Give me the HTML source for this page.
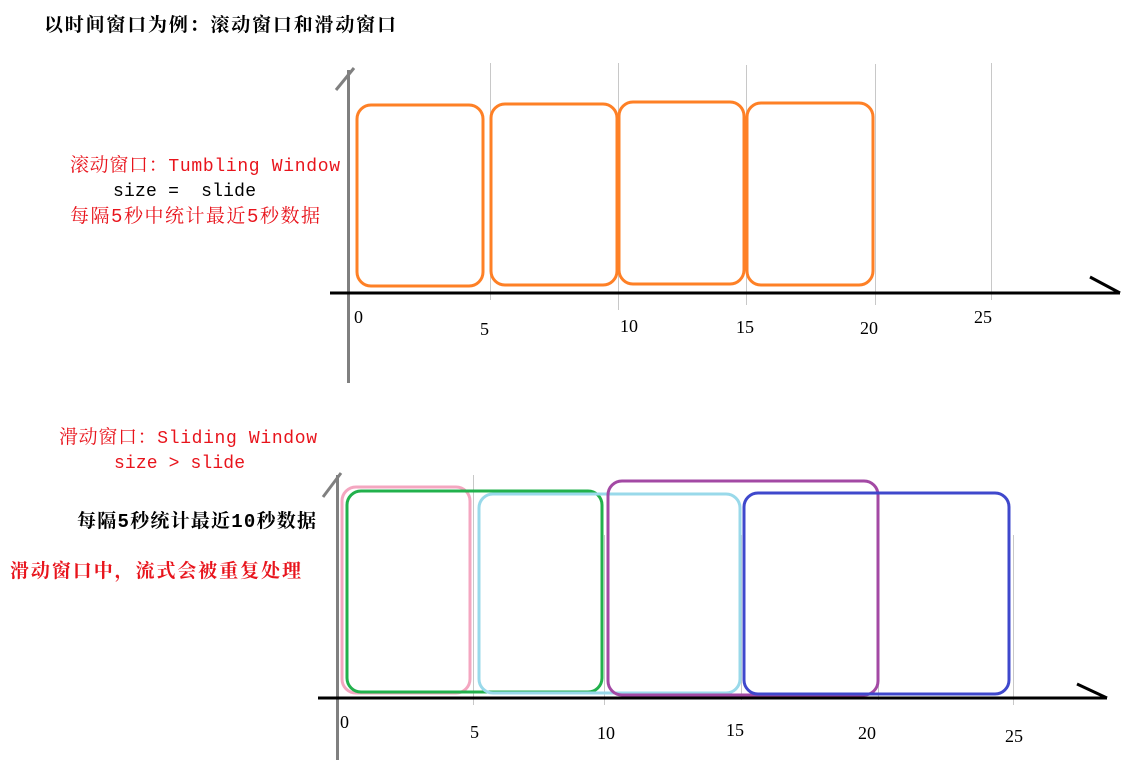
<!DOCTYPE html>
<html><head><meta charset="utf-8"><style>
html,body{margin:0;padding:0;background:#fff;}
svg{display:block;}
.cj{font-family:"Liberation Mono","Noto Serif CJK SC","Noto Sans CJK SC",monospace;}
.n{font-family:"Liberation Serif",serif;font-size:18px;fill:#000;}
</style></head><body>
<svg width="1134" height="760" viewBox="0 0 1134 760" xmlns="http://www.w3.org/2000/svg">
<rect width="1134" height="760" fill="#fff"/>
<text class="cj" x="44" y="31" font-size="19" font-weight="bold" fill="#000" textLength="352" lengthAdjust="spacing">以时间窗口为例：滚动窗口和滑动窗口</text>
<text class="cj" x="70" y="171" font-size="18" fill="#e8141c" textLength="270" lengthAdjust="spacing"><tspan font-size="19">滚动窗口：</tspan>Tumbling Window</text>
<text class="cj" x="113" y="196" font-size="18" fill="#000" xml:space="preserve" textLength="143" lengthAdjust="spacing">size =  slide</text>
<text class="cj" x="70" y="222" font-size="19" fill="#e8141c" textLength="250" lengthAdjust="spacing">每隔5秒中统计最近5秒数据</text>
<text class="cj" x="59" y="443" font-size="18" fill="#e8141c" textLength="258" lengthAdjust="spacing"><tspan font-size="19">滑动窗口：</tspan>Sliding Window</text>
<text class="cj" x="114" y="468" font-size="18" fill="#e8141c" textLength="131" lengthAdjust="spacing">size &gt; slide</text>
<text class="cj" x="77" y="527" font-size="19" font-weight="bold" fill="#000" textLength="239" lengthAdjust="spacing">每隔5秒统计最近10秒数据</text>
<text class="cj" x="10" y="577" font-size="19" font-weight="bold" fill="#e8141c" textLength="291" lengthAdjust="spacing">滑动窗口中，流式会被重复处理</text>

<g stroke="#c8c8c8" stroke-width="1">
<line x1="490.5" y1="63" x2="490.5" y2="300"/>
<line x1="618.5" y1="63" x2="618.5" y2="310"/>
<line x1="746.5" y1="65" x2="746.5" y2="305"/>
<line x1="875.5" y1="64" x2="875.5" y2="305"/>
<line x1="991.5" y1="63" x2="991.5" y2="300"/>
</g>
<g fill="none" stroke="#fe8026" stroke-width="3">
<rect x="357" y="105" width="126" height="181" rx="14"/>
<rect x="491" y="104" width="126" height="181" rx="14"/>
<rect x="619" y="102" width="125" height="182" rx="14"/>
<rect x="747" y="103" width="126" height="182" rx="14"/>
</g>
<line x1="348.5" y1="70" x2="348.5" y2="383" stroke="#808080" stroke-width="3"/>
<line x1="336" y1="90" x2="354" y2="68" stroke="#808080" stroke-width="3"/>
<line x1="330" y1="293" x2="1120" y2="293" stroke="#000" stroke-width="3"/>
<line x1="1090" y1="277" x2="1120" y2="293" stroke="#000" stroke-width="3"/>
<g class="n">
<text x="354" y="323">0</text>
<text x="480" y="335">5</text>
<text x="620" y="332">10</text>
<text x="736" y="333">15</text>
<text x="860" y="334">20</text>
<text x="974" y="323">25</text>
</g>

<g stroke="#c8c8c8" stroke-width="1">
<line x1="473.5" y1="475" x2="473.5" y2="705"/>
<line x1="604.5" y1="535" x2="604.5" y2="705"/>
<line x1="741.5" y1="535" x2="741.5" y2="700"/>
<line x1="878.5" y1="535" x2="878.5" y2="700"/>
<line x1="1013.5" y1="535" x2="1013.5" y2="705"/>
</g>
<g fill="none" stroke-width="3">
<rect x="342" y="487" width="128" height="206" rx="14" stroke="#f4a6c0"/>
<rect x="347" y="491" width="255" height="201" rx="14" stroke="#22b14c"/>
<rect x="479" y="494" width="261" height="199" rx="14" stroke="#99d9ea"/>
<rect x="608" y="481" width="270" height="214" rx="14" stroke="#a349a4"/>
<rect x="744" y="493" width="265" height="201" rx="14" stroke="#3f48cc"/>
</g>
<line x1="337.5" y1="475" x2="337.5" y2="760" stroke="#808080" stroke-width="3"/>
<line x1="323" y1="497" x2="341" y2="473" stroke="#808080" stroke-width="3"/>
<line x1="318" y1="698" x2="1107" y2="698" stroke="#000" stroke-width="3"/>
<line x1="1077" y1="684" x2="1107" y2="698" stroke="#000" stroke-width="3"/>
<g class="n">
<text x="340" y="728">0</text>
<text x="470" y="738">5</text>
<text x="597" y="739">10</text>
<text x="726" y="736">15</text>
<text x="858" y="739">20</text>
<text x="1005" y="742">25</text>
</g>
</svg>
</body></html>
